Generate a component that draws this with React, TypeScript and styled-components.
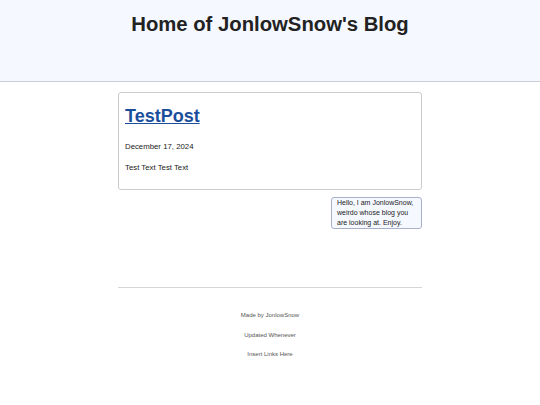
import React from "react";
import styled, { createGlobalStyle } from "styled-components";

const GlobalStyle = createGlobalStyle`
  html, body {
    margin: 0;
    padding: 0;
    background: #ffffff;
    font-family: "Liberation Sans", Arial, sans-serif;
    color: #222;
  }
`;

const Header = styled.header`
  height: 81px;
  background: #f5f8ff;
  border-bottom: 1px solid #c9ced6;
  display: flex;
  justify-content: center;
`;

const Title = styled.h1`
  margin: 12px 0 0;
  font-size: 20.3px;
  line-height: 24px;
  font-weight: bold;
  color: #222;
`;

const Main = styled.main`
  width: 304px;
  margin: 10px auto 0;
  display: flex;
  flex-direction: column;
`;

const PostCard = styled.article`
  box-sizing: border-box;
  height: 98px;
  border: 1px solid #cccccc;
  border-radius: 3px;
  padding: 13px 6px;
`;

const PostTitle = styled.a`
  display: inline-block;
  font-size: 18px;
  line-height: 20px;
  font-weight: bold;
  color: #1b4f9c;
  text-decoration: underline;
`;

const PostLine = styled.p<{ $top: number }>`
  margin: ${(p) => p.$top}px 0 0;
  font-size: 7.8px;
  line-height: 10px;
  color: #222;
`;

const Bubble = styled.div`
  align-self: flex-end;
  box-sizing: border-box;
  width: 91px;
  margin-top: 7px;
  padding: 0 5px;
  background: #f5f8ff;
  border: 1px solid #a9b0cc;
  border-radius: 3px;
  font-size: 7px;
  line-height: 10px;
  color: #222;
`;

const Divider = styled.hr`
  width: 100%;
  margin: 58px 0 0;
  border: none;
  border-top: 1px solid #d6d6d6;
`;

const Footer = styled.footer`
  display: flex;
  flex-direction: column;
  align-items: center;
  gap: 11.5px;
  padding-top: 23px;
`;

const FooterLine = styled.p`
  margin: 0;
  font-size: 6px;
  line-height: 8px;
  color: #555;
`;

export default function App() {
  return (
    <>
      <GlobalStyle />
      <Header>
        <Title>Home of JonlowSnow's Blog</Title>
      </Header>
      <Main>
        <PostCard>
          <PostTitle href="#">TestPost</PostTitle>
          <PostLine $top={16}>December 17, 2024</PostLine>
          <PostLine $top={11}>Test Text Test Text</PostLine>
        </PostCard>
        <Bubble>Hello, I am JonlowSnow, weirdo whose blog you are looking at. Enjoy.</Bubble>
        <Divider />
        <Footer>
          <FooterLine>Made by JonlowSnow</FooterLine>
          <FooterLine>Updated Whenever</FooterLine>
          <FooterLine>Insert Links Here</FooterLine>
        </Footer>
      </Main>
    </>
  );
}
